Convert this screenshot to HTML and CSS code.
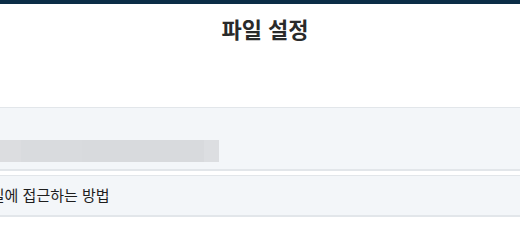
FILE: index.html
```html
<!DOCTYPE html>
<html lang="ko">
<head>
<meta charset="utf-8">
<link rel="stylesheet" href="styles.css">
</head>
<body>
<div class="topbar"></div>
<header class="header">
  <h1 class="title">파일 설정</h1>
</header>
<section class="panel panel-blur">
  <div class="blur-bar">
    <span class="seg seg-a"></span>
    <span class="seg seg-b"></span>
    <span class="seg seg-c"></span>
    <span class="seg seg-d"></span>
  </div>
</section>
<section class="panel panel-link">
  <span class="link-text">파일에 접근하는 방법</span>
</section>
</body>
</html>
```

FILE: styles.css
```css
html, body {
  margin: 0;
  padding: 0;
  background: #ffffff;
  font-family: "Noto Sans CJK KR", "Noto Sans", sans-serif;
  color: #222222;
}

.topbar {
  height: 4px;
  background: #0b2d46;
}

.header {
  height: 103px;
  display: flex;
  justify-content: center;
  padding-left: 10px;
  box-sizing: border-box;
}

.title {
  margin: 9px 0 0 0;
  font-size: 22px;
  line-height: 30px;
  font-weight: 700;
  color: #2a2a2a;
}

.panel {
  background: #f3f6f9;
  border-top: 1px solid #e2e6ea;
  border-bottom: 2px solid #e2e6ea;
  box-sizing: border-box;
}

.panel-blur {
  height: 64px;
  display: flex;
  align-items: flex-start;
  padding-top: 32px;
}

.blur-bar {
  display: flex;
  height: 22px;
  width: 219px;
}

.seg { display: block; height: 100%; }
.seg-a { width: 21px; background: #dcdde0; }
.seg-b { width: 61px; background: #d9dbde; }
.seg-c { width: 122px; background: #d8dadd; }
.seg-d { width: 15px; background: #dcdee1; }

.panel-link {
  margin-top: 4px;
  height: 42px;
  display: flex;
  align-items: center;
}

.link-text {
  margin-left: -23px;
  padding-bottom: 2px;
  font-size: 15px;
  line-height: 20px;
  color: #1e1e1e;
  white-space: nowrap;
}
```
